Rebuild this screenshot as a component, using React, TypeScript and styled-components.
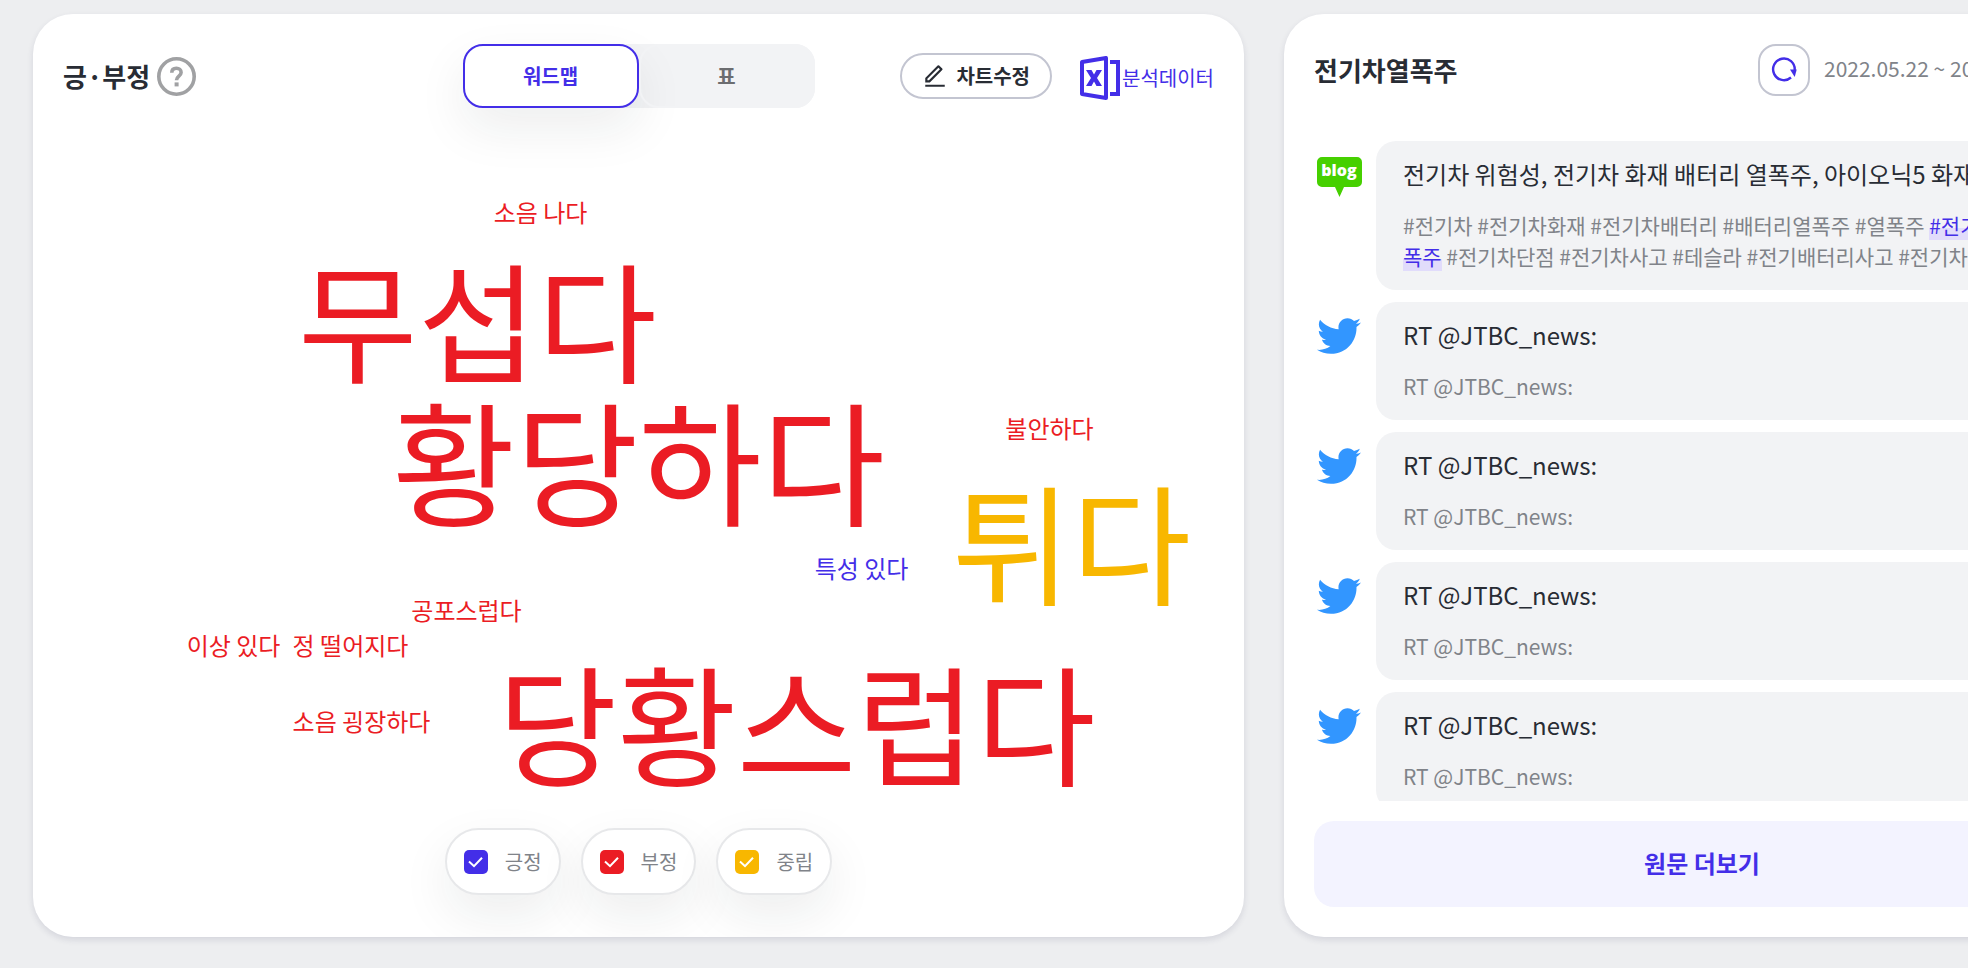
import React, { useState } from "react";
import styled, { createGlobalStyle } from "styled-components";
import { FaTwitter } from "react-icons/fa";

const color = {
  page: "#edeef0",
  primary: "#432ee8",
  negative: "#eb1c24",
  neutral: "#f8b700",
  ink: "#282c34",
  muted: "#808389",
  soft: "#f2f3f5",
  line: "#c3c5d1",
};

const softShadow = "0 20px 50px rgba(30, 40, 34, 0.08)";

const GlobalStyle = createGlobalStyle`
  *, *::before, *::after { box-sizing: border-box; }
  body {
    margin: 0;
    background: ${color.page};
    color: ${color.ink};
    font-family: "Noto Sans CJK KR", "Noto Sans", sans-serif;
    overflow-x: hidden;
  }
  button, input { font: inherit; margin: 0; }
  h2, h3, p { margin: 0; }
`;

const Board = styled.main`
  display: grid;
  grid-template-columns: minmax(0, 1fr) 836px;
  gap: 40px;
  width: calc(100% + 184px);
  min-height: 100vh;
  padding: 14px 32px 31px 33px;
`;

const Panel = styled.section`
  display: flex;
  flex-direction: column;
  padding: 30px;
  border-radius: 40px;
  background: #fff;
  box-shadow: 0 3px 6px rgba(40, 42, 80, 0.12);
  overflow: hidden;
`;

const Header = styled.header`
  display: grid;
  grid-template-columns: 1fr auto 1fr;
  align-items: center;
  height: 64px;
`;

const Title = styled.h2`
  font-size: 26px;
  line-height: 36px;
  font-weight: 700;
`;

const TitleGroup = styled.div`
  display: flex;
  align-items: center;
  gap: 7px;
`;

const HelpButton = styled.button`
  display: flex;
  padding: 0;
  border: 0;
  background: none;
  cursor: pointer;
`;

const Tabs = styled.div`
  display: flex;
  border-radius: 20px;
  background: ${color.soft};
`;

const Tab = styled.button<{ $active: boolean }>`
  width: 176px;
  height: 64px;
  padding: 0;
  border: 2px solid ${(p) => (p.$active ? color.primary : color.soft)};
  border-radius: 20px;
  background: ${(p) => (p.$active ? "#fff" : "transparent")};
  box-shadow: ${(p) => (p.$active ? softShadow : "none")};
  color: ${(p) => (p.$active ? color.primary : "#6c6d70")};
  font-size: 20px;
  line-height: 28px;
  font-weight: 700;
  cursor: pointer;
`;

const Actions = styled.div`
  display: flex;
  align-items: center;
  justify-content: flex-end;
  gap: 28px;
`;

const EditButton = styled.button`
  display: flex;
  align-items: center;
  gap: 8px;
  height: 46px;
  padding: 0 20px;
  border: 2px solid ${color.line};
  border-radius: 24px;
  background: #fff;
  color: ${color.ink};
  font-size: 20px;
  line-height: 28px;
  font-weight: 700;
  cursor: pointer;
`;

const ExportLink = styled.a`
  display: flex;
  align-items: center;
  gap: 2px;
  padding-top: 3px;
  color: ${color.primary};
  font-size: 20px;
  line-height: 28px;
  text-decoration: none;
`;

const Cloud = styled.div`
  position: relative;
  flex: 1;
  min-height: 690px;
`;

const Word = styled.span<{ $size: number; $tone: string }>`
  position: absolute;
  transform: translate(-50%, -50%);
  color: ${(p) => p.$tone};
  font-size: ${(p) => p.$size}px;
  font-weight: 400;
  line-height: 1;
  white-space: nowrap;
`;

const Legend = styled.div`
  display: flex;
  justify-content: center;
  gap: 20px;
  padding-bottom: 12px;
`;

const LegendItem = styled.label`
  display: flex;
  align-items: center;
  gap: 17px;
  height: 67px;
  padding: 0 17px;
  border: 2px solid #e7e8ea;
  border-radius: 34px;
  background: #fff;
  box-shadow: ${softShadow};
  color: ${color.muted};
  font-size: 20px;
  line-height: 28px;
  cursor: pointer;
`;

const CheckBox = styled.span<{ $tone: string }>`
  display: grid;
  width: 24px;
  height: 24px;
  border-radius: 5px;
  background: ${(p) => p.$tone};

  > * {
    grid-area: 1 / 1;
  }

  input {
    appearance: none;
    width: 24px;
    height: 24px;
    cursor: pointer;
  }

  svg {
    pointer-events: none;
    visibility: hidden;
  }

  input:checked + svg {
    visibility: visible;
  }
`;

const FeedHeader = styled.header`
  display: flex;
  align-items: center;
  justify-content: space-between;
  height: 52px;
`;

const Period = styled.div`
  display: flex;
  align-items: center;
  gap: 14px;
`;

const RefreshButton = styled.button`
  display: grid;
  place-items: center;
  width: 52px;
  height: 52px;
  padding: 0;
  border: 2px solid ${color.line};
  border-radius: 18px;
  background: #fff;
  cursor: pointer;
`;

const DateRange = styled.time`
  min-width: 266px;
  padding-bottom: 4px;
  color: ${color.muted};
  font-size: 21px;
  line-height: 30px;
  white-space: nowrap;
`;

const Feed = styled.ul`
  display: flex;
  flex-direction: column;
  gap: 12px;
  height: 660px;
  margin: 45px 0 20px;
  padding: 0 34px 0 0;
  list-style: none;
  overflow-y: auto;
  scrollbar-width: none;
`;

const Post = styled.li`
  display: grid;
  grid-template-columns: 50px minmax(0, 1fr);
  gap: 12px;
`;

const SourceIcon = styled.span`
  display: flex;
  justify-content: center;
  padding-top: 12px;
  color: #3296ff;
`;

const Bubble = styled.article`
  padding: 17px 27px 18px;
  border-radius: 20px;
  background: ${color.soft};
`;

const PostTitle = styled.h3`
  margin-bottom: 20px;
  font-size: 24px;
  line-height: 32px;
  font-weight: 400;
  white-space: nowrap;
  overflow: hidden;
`;

const PostBody = styled.p`
  color: ${color.muted};
  font-size: 21px;
  line-height: 31px;
  word-break: break-all;
`;

const Highlight = styled.mark`
  background: linear-gradient(transparent 60%, #e1dcfb 60%);
  color: ${color.primary};
`;

const MoreButton = styled.button`
  height: 86px;
  padding: 0 0 2px;
  border: 0;
  border-radius: 20px;
  background: #f3f3ff;
  color: ${color.primary};
  font-size: 24px;
  line-height: 32px;
  font-weight: 700;
  cursor: pointer;
`;

const HelpIcon = () => (
  <svg width="39" height="39" viewBox="0 0 39 39" fill="none" aria-hidden="true">
    <circle cx="19.5" cy="19.5" r="17.7" stroke="#a0a1a3" strokeWidth="3.6" />
    <path d="M14.8 15.800c0-2.900 1.900-4.500 4.600-4.500s4.700 1.600 4.700 4.200c0 3.700-4.600 3.600-4.600 7.700" stroke="#a0a1a3" strokeWidth="3.600" />
    <rect x="17.600" y="25.400" width="4" height="4" fill="#a0a1a3" />
  </svg>
);

const PencilIcon = () => (
  <svg width="26" height="26" viewBox="0 0 24 24" fill="currentColor" aria-hidden="true">
    <path d="M6.414 16 16.556 5.858l-1.414-1.414L5 14.586V16h1.414Zm.829 2H3v-4.243L14.435 2.322a1 1 0 0 1 1.414 0l2.829 2.829a1 1 0 0 1 0 1.414L7.243 18ZM3 20h18v2H3v-2Z" />
  </svg>
);

const ExcelIcon = () => (
  <svg width="40" height="44" viewBox="0 0 40 44" fill="none" aria-hidden="true">
    <path d="M2 6 26 2v40L2 38Z" stroke="currentColor" strokeWidth="4" strokeLinejoin="round" />
    <path d="M30 6h8v32h-8" stroke="currentColor" strokeWidth="4" />
    <path d="M6 14h5.500l2.500 4.500 2.500-4.500H22l-5 8 5 8h-5.500L14 25.500 11.500 30H6l5-8Z" fill="currentColor" />
  </svg>
);

const CheckIcon = () => (
  <svg width="24" height="24" viewBox="0 0 24 24" fill="none" aria-hidden="true">
    <path d="m5 11.500 5 4.700 8-8.500" stroke="#fff" strokeWidth="2" />
  </svg>
);

const RefreshIcon = () => (
  <svg width="28" height="28" viewBox="0 0 28 28" fill="none" aria-hidden="true">
    <path d="M21 21.500A10.800 10.800 0 1 1 24.700 14" stroke={color.primary} strokeWidth="2.400" />
    <path d="M20 13.500h6.700l-2 7.500Z" fill={color.primary} />
  </svg>
);

const BlogIcon = () => (
  <svg width="50" height="44" viewBox="0 0 50 44" role="img" aria-label="blog">
    <path d="M8 4h35a5 5 0 0 1 5 5v20a5 5 0 0 1-5 5H30l-4.500 10L21 34H8a5 5 0 0 1-5-5V9a5 5 0 0 1 5-5Z" fill="#46d000" />
    <text x="25" y="23" textAnchor="middle" fill="#fff" fontFamily="Open Sans, sans-serif" fontSize="16" fontWeight="800">
      blog
    </text>
  </svg>
);

const words = [
  { text: "소음 나다", x: -98, y: 104, size: 24, tone: color.negative },
  { text: "무섭다", x: -161, y: 208, size: 130, tone: color.negative },
  { text: "황당하다", x: 0, y: 350, size: 134, tone: color.negative },
  { text: "불안하다", x: 411, y: 320, size: 24, tone: color.negative },
  { text: "튀다", x: 433, y: 430, size: 130, tone: color.neutral },
  { text: "특성 있다", x: 223, y: 460, size: 24, tone: color.primary },
  { text: "공포스럽다", x: -172, y: 502, size: 24, tone: color.negative },
  { text: "이상 있다", x: -405, y: 537, size: 24, tone: color.negative },
  { text: "정 떨어지다", x: -288, y: 537, size: 24, tone: color.negative },
  { text: "소음 굉장하다", x: -277, y: 613, size: 24, tone: color.negative },
  { text: "당황스럽다", x: 158, y: 611, size: 130, tone: color.negative },
];

const legend = [
  { label: "긍정", tone: color.primary },
  { label: "부정", tone: color.negative },
  { label: "중립", tone: color.neutral },
];

const tabs = ["워드맵", "표"];

const tweets = [1, 2, 3, 4];

export default function App() {
  const [tab, setTab] = useState(tabs[0]);

  return (
    <>
      <GlobalStyle />
      <Board>
        <Panel>
          <Header>
            <TitleGroup>
              <Title>긍·부정</Title>
              <HelpButton type="button" aria-label="도움말">
                <HelpIcon />
              </HelpButton>
            </TitleGroup>
            <Tabs role="tablist">
              {tabs.map((name) => (
                <Tab key={name} type="button" role="tab" aria-selected={tab === name} $active={tab === name} onClick={() => setTab(name)}>
                  {name}
                </Tab>
              ))}
            </Tabs>
            <Actions>
              <EditButton type="button">
                <PencilIcon />
                차트수정
              </EditButton>
              <ExportLink href="#export">
                <ExcelIcon />
                분석데이터
              </ExportLink>
            </Actions>
          </Header>
          <Cloud>
            {words.map((w) => (
              <Word key={w.text} $size={w.size} $tone={w.tone} style={{ left: `calc(50% + ${w.x}px)`, top: w.y }}>
                {w.text}
              </Word>
            ))}
          </Cloud>
          <Legend>
            {legend.map((item) => (
              <LegendItem key={item.label}>
                <CheckBox $tone={item.tone}>
                  <input type="checkbox" defaultChecked />
                  <CheckIcon />
                </CheckBox>
                {item.label}
              </LegendItem>
            ))}
          </Legend>
        </Panel>

        <Panel>
          <FeedHeader>
            <Title>전기차열폭주</Title>
            <Period>
              <RefreshButton type="button" aria-label="새로고침">
                <RefreshIcon />
              </RefreshButton>
              <DateRange>2022.05.22 ~ 2022.06.21</DateRange>
            </Period>
          </FeedHeader>
          <Feed>
            <Post>
              <SourceIcon>
                <BlogIcon />
              </SourceIcon>
              <Bubble>
                <PostTitle>전기차 위험성, 전기차 화재 배터리 열폭주, 아이오닉5 화재</PostTitle>
                <PostBody>
                  #전기차 #전기차화재 #전기차배터리 #배터리열폭주 #열폭주 <Highlight>#전기차열폭주</Highlight> #전기차단점
                  #전기차사고 #테슬라 #전기배터리사고 #전기차
                </PostBody>
              </Bubble>
            </Post>
            {tweets.map((id) => (
              <Post key={id}>
                <SourceIcon>
                  <FaTwitter size={44} aria-label="Twitter" />
                </SourceIcon>
                <Bubble>
                  <PostTitle>RT @JTBC_news:</PostTitle>
                  <PostBody>RT @JTBC_news:</PostBody>
                </Bubble>
              </Post>
            ))}
          </Feed>
          <MoreButton type="button">원문 더보기</MoreButton>
        </Panel>
      </Board>
    </>
  );
}
